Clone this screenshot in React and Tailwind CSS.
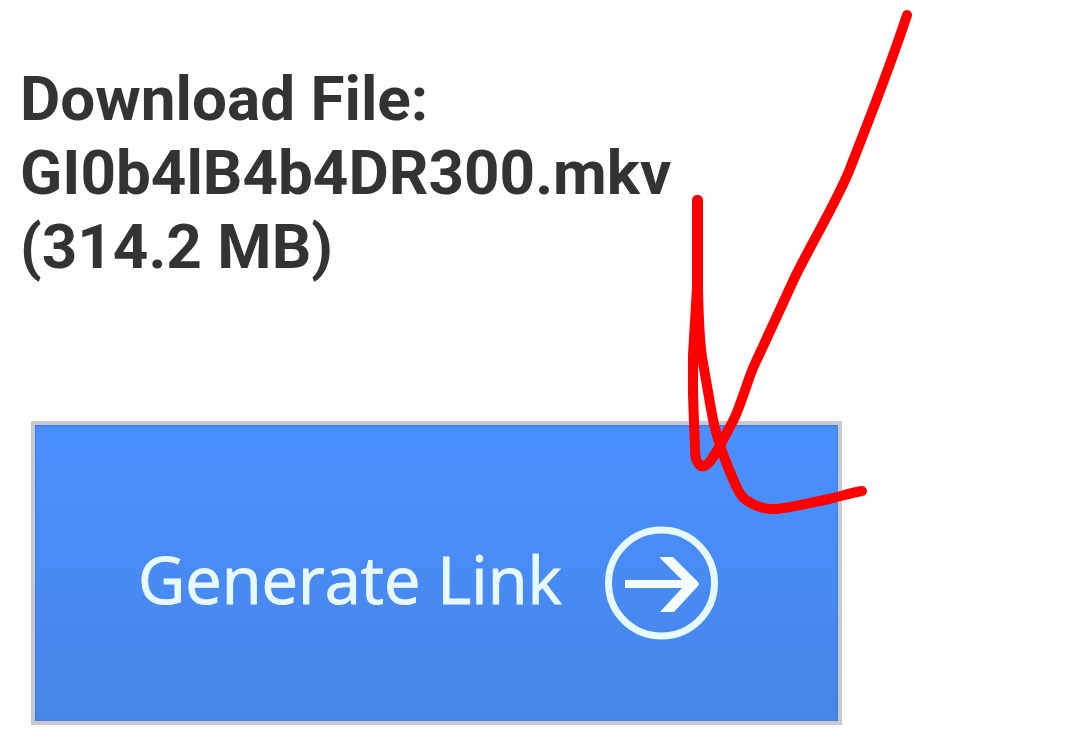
function ArrowCircle() {
  return (
    <svg
      className="size-[116px] shrink-0"
      viewBox="0 0 116 116"
      fill="none"
      aria-hidden="true"
    >
      <circle cx="58.5" cy="58" r="53" stroke="#e6fbff" strokeWidth="7" />
      <path d="M22 55H79L57 33V32H70L95 57L96 59L95 61L71 87H57L79 63H22Z" fill="#f4fcff" />
    </svg>
  );
}

function PenMark() {
  return (
    <svg
      className="absolute top-0 left-0 w-[920px] h-[540px] pointer-events-none"
      viewBox="0 0 920 540"
      fill="none"
      stroke="#ff0000"
      strokeWidth="10"
      strokeLinecap="round"
      strokeLinejoin="round"
      aria-hidden="true"
    >
      <path d="M907 15C888 73 868 122 851 166C840 196 811 244 795 277L753 368C745 388 740 408 733 421C726 434 719 449 711 460C705 468 701 468 698 463C695 459 695 454 695 448L693 395V355L697 288V200" />
      <path d="M698 200V288Q699 337 702 357L711 409C715 434 721 450 728 467C735 484 739 495 746 500Q760 510 776 509C789 508 810 503 829 499C842 496 850 493 862 491" />
    </svg>
  );
}

export default function App() {
  return (
    <div className="relative min-h-screen overflow-hidden bg-[#fefefe]">
      <main className="px-5 pt-[62px] pb-7">
        <h1 className="font-['Roboto',sans-serif] text-[62px] leading-[74px] font-bold text-[#333333]">
          Download File:
          <br />
          GI0b4lB4b4DR300.mkv
          <br />
          (314.2 MB)
        </h1>
        <button
          type="button"
          className="mt-[137px] ml-[11px] flex w-full max-w-[811px] items-center gap-[41px] border-4 border-[#c8c9cc] bg-linear-to-b from-[#4a90ff] to-[#4686e8] pt-[100px] pb-20 pl-[103px] shadow-[inset_0_1px_3px_rgba(30,80,170,0.4)]"
        >
          <span className="pb-2 font-['Open_Sans',sans-serif] text-[65px] leading-[100px] whitespace-nowrap text-[#e8f9ff] [-webkit-text-stroke:1px_#e8f9ff]">
            Generate Link
          </span>
          <ArrowCircle />
        </button>
      </main>
      <PenMark />
    </div>
  );
}
